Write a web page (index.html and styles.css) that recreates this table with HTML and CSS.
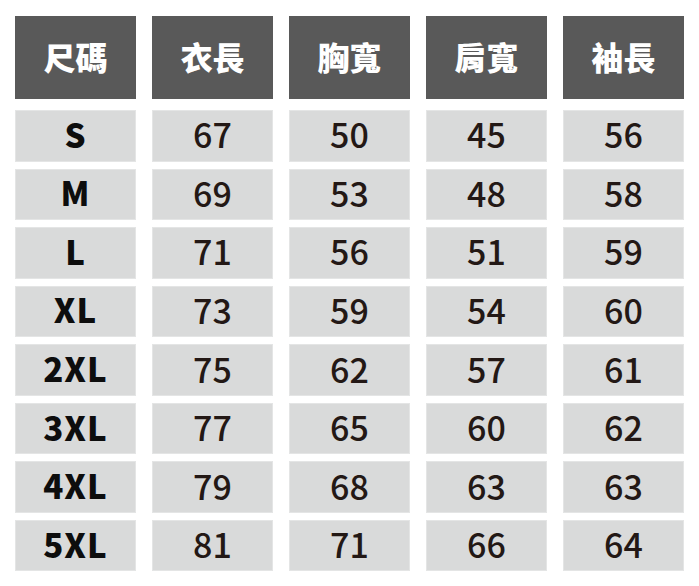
FILE: index.html
```html
<!DOCTYPE html>
<html lang="zh-Hant">
<head>
<meta charset="utf-8">
<link rel="stylesheet" href="styles.css">
</head>
<body>
<div class="chart">
  <div class="head">
    <div class="hcell">尺碼</div>
    <div class="hcell">衣長</div>
    <div class="hcell">胸寬</div>
    <div class="hcell">肩寬</div>
    <div class="hcell">袖長</div>
  </div>
  <div class="body">
    <div class="cell size">S</div><div class="cell">67</div><div class="cell">50</div><div class="cell">45</div><div class="cell">56</div>
    <div class="cell size">M</div><div class="cell">69</div><div class="cell">53</div><div class="cell">48</div><div class="cell">58</div>
    <div class="cell size">L</div><div class="cell">71</div><div class="cell">56</div><div class="cell">51</div><div class="cell">59</div>
    <div class="cell size">XL</div><div class="cell">73</div><div class="cell">59</div><div class="cell">54</div><div class="cell">60</div>
    <div class="cell size">2XL</div><div class="cell">75</div><div class="cell">62</div><div class="cell">57</div><div class="cell">61</div>
    <div class="cell size">3XL</div><div class="cell">77</div><div class="cell">65</div><div class="cell">60</div><div class="cell">62</div>
    <div class="cell size">4XL</div><div class="cell">79</div><div class="cell">68</div><div class="cell">63</div><div class="cell">63</div>
    <div class="cell size">5XL</div><div class="cell">81</div><div class="cell">71</div><div class="cell">66</div><div class="cell">64</div>
  </div>
</div>
</body>
</html>
```
FILE: styles.css
```css
html, body {
  margin: 0;
  padding: 0;
  background: #ffffff;
}
body {
  font-family: "Noto Sans CJK TC", "Noto Sans", sans-serif;
}
.chart {
  padding: 16px 15px 0 15px;
}
.head, .body {
  display: grid;
  grid-template-columns: repeat(5, 121px);
  column-gap: 16px;
}
.head {
  margin-bottom: 11px;
}
.hcell {
  box-sizing: border-box;
  height: 83px;
  padding-bottom: 3px;
  background: #595959;
  color: #ffffff;
  font-size: 32px;
  font-weight: 900;
  line-height: 1;
  display: flex;
  align-items: center;
  justify-content: center;
}
.body {
  grid-auto-rows: 51.5px;
  row-gap: 7.07px;
}
.cell {
  box-sizing: border-box;
  padding-bottom: 3px;
  background: #d9dada;
  border: 1px solid #e4e5e5;
  color: #231815;
  font-size: 34px;
  font-weight: 500;
  display: flex;
  align-items: center;
  justify-content: center;
  line-height: 1;
}
.cell.size {
  color: #0d0d0d;
  font-weight: 900;
  font-size: 33px;
  letter-spacing: 1px;
}
```
